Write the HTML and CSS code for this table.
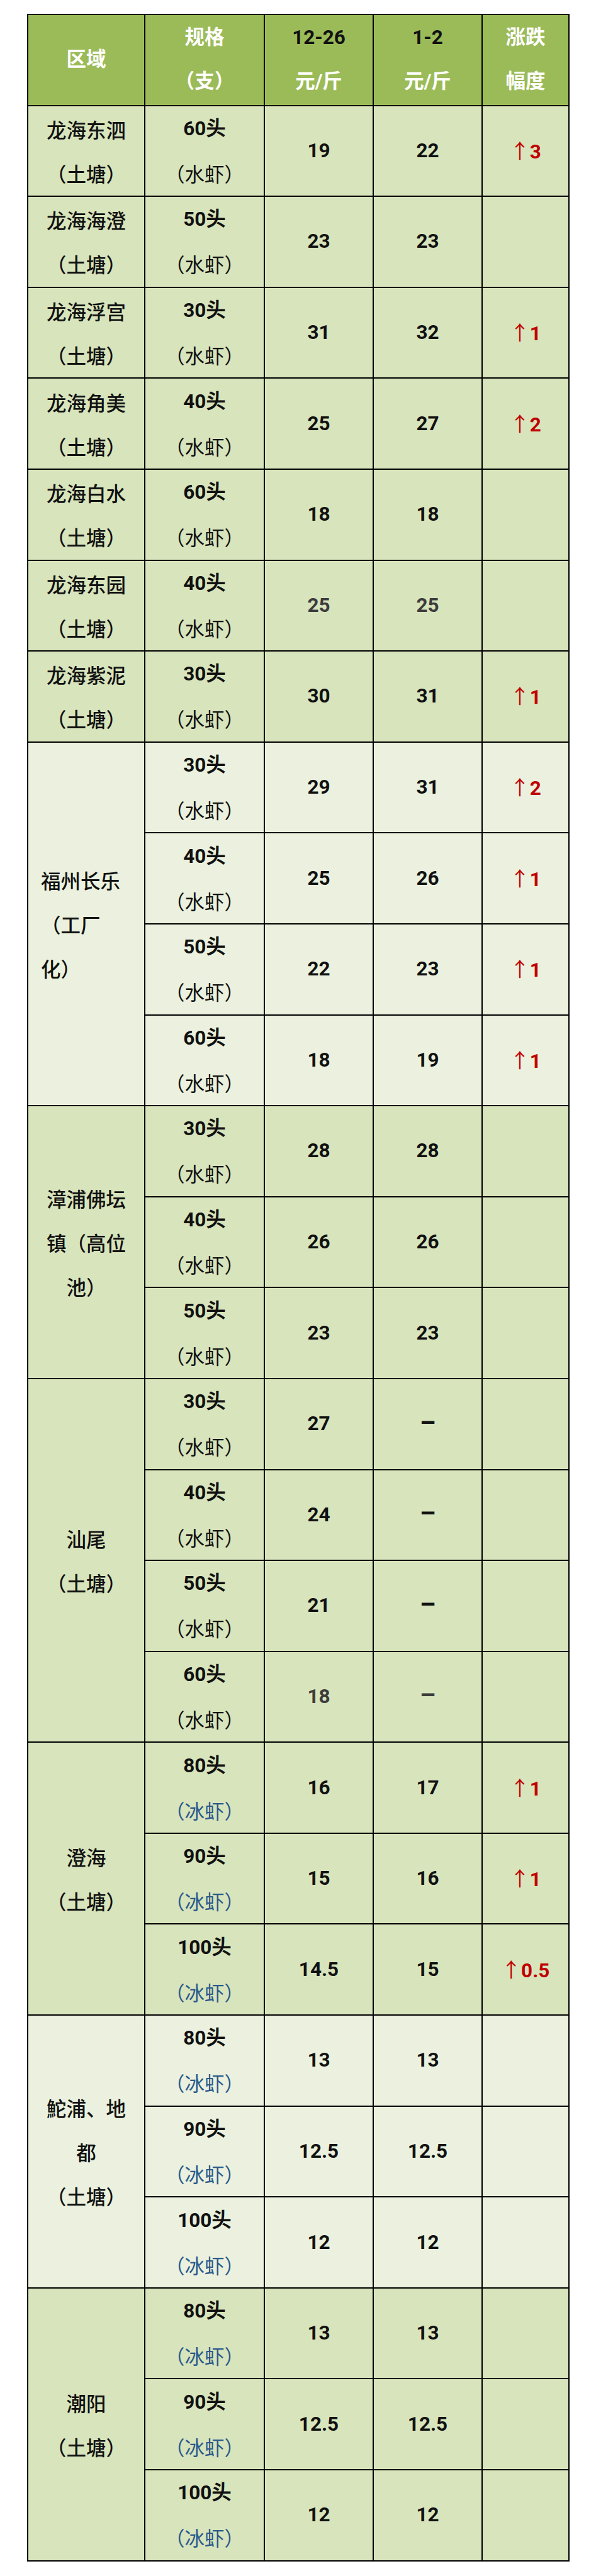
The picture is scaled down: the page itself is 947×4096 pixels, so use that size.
FILE: index.html
```html
<!DOCTYPE html>
<html lang="zh-CN">
<head>
<meta charset="utf-8">
<title>对虾价格</title>
<link rel="stylesheet" href="styles.css">
</head>
<body>
<table class="price">
  <colgroup>
    <col class="c-region"><col class="c-spec"><col class="c-p1"><col class="c-p2"><col class="c-chg">
  </colgroup>
  <thead>
    <tr class="head">
      <th>区域</th>
      <th><span class="ln">规格</span><span class="ln">（支）</span></th>
      <th><span class="ln num">12-26</span><span class="ln">元/斤</span></th>
      <th><span class="ln num">1-2</span><span class="ln">元/斤</span></th>
      <th><span class="ln">涨跌</span><span class="ln">幅度</span></th>
    </tr>
  </thead>
  <tbody>
    <tr class="dark">
      <td class="region"><span class="ln">龙海东泗</span><span class="ln">（土塘）</span></td>
      <td class="spec"><span class="ln s1">60头</span><span class="ln s2">（水虾）</span></td>
      <td class="num">19</td><td class="num">22</td>
      <td class="chg"><span class="arrow">↑</span>3</td>
    </tr>
    <tr class="dark">
      <td class="region"><span class="ln">龙海海澄</span><span class="ln">（土塘）</span></td>
      <td class="spec"><span class="ln s1">50头</span><span class="ln s2">（水虾）</span></td>
      <td class="num">23</td><td class="num">23</td>
      <td class="chg"></td>
    </tr>
    <tr class="dark">
      <td class="region"><span class="ln">龙海浮宫</span><span class="ln">（土塘）</span></td>
      <td class="spec"><span class="ln s1">30头</span><span class="ln s2">（水虾）</span></td>
      <td class="num">31</td><td class="num">32</td>
      <td class="chg"><span class="arrow">↑</span>1</td>
    </tr>
    <tr class="dark">
      <td class="region"><span class="ln">龙海角美</span><span class="ln">（土塘）</span></td>
      <td class="spec"><span class="ln s1">40头</span><span class="ln s2">（水虾）</span></td>
      <td class="num">25</td><td class="num">27</td>
      <td class="chg"><span class="arrow">↑</span>2</td>
    </tr>
    <tr class="dark">
      <td class="region"><span class="ln">龙海白水</span><span class="ln">（土塘）</span></td>
      <td class="spec"><span class="ln s1">60头</span><span class="ln s2">（水虾）</span></td>
      <td class="num">18</td><td class="num">18</td>
      <td class="chg"></td>
    </tr>
    <tr class="dark">
      <td class="region"><span class="ln">龙海东园</span><span class="ln">（土塘）</span></td>
      <td class="spec"><span class="ln s1">40头</span><span class="ln s2">（水虾）</span></td>
      <td class="num grey">25</td><td class="num grey">25</td>
      <td class="chg"></td>
    </tr>
    <tr class="dark">
      <td class="region"><span class="ln">龙海紫泥</span><span class="ln">（土塘）</span></td>
      <td class="spec"><span class="ln s1">30头</span><span class="ln s2">（水虾）</span></td>
      <td class="num">30</td><td class="num">31</td>
      <td class="chg"><span class="arrow">↑</span>1</td>
    </tr>

    <tr class="light">
      <td class="region left" rowspan="4"><span class="ln">福州长乐</span><span class="ln">（工厂</span><span class="ln">化）</span></td>
      <td class="spec"><span class="ln s1">30头</span><span class="ln s2">（水虾）</span></td>
      <td class="num">29</td><td class="num">31</td>
      <td class="chg"><span class="arrow">↑</span>2</td>
    </tr>
    <tr class="light">
      <td class="spec"><span class="ln s1">40头</span><span class="ln s2">（水虾）</span></td>
      <td class="num">25</td><td class="num">26</td>
      <td class="chg"><span class="arrow">↑</span>1</td>
    </tr>
    <tr class="light">
      <td class="spec"><span class="ln s1">50头</span><span class="ln s2">（水虾）</span></td>
      <td class="num">22</td><td class="num">23</td>
      <td class="chg"><span class="arrow">↑</span>1</td>
    </tr>
    <tr class="light">
      <td class="spec"><span class="ln s1">60头</span><span class="ln s2">（水虾）</span></td>
      <td class="num">18</td><td class="num">19</td>
      <td class="chg"><span class="arrow">↑</span>1</td>
    </tr>

    <tr class="dark">
      <td class="region" rowspan="3"><span class="ln">漳浦佛坛</span><span class="ln">镇（高位</span><span class="ln">池）</span></td>
      <td class="spec"><span class="ln s1">30头</span><span class="ln s2">（水虾）</span></td>
      <td class="num">28</td><td class="num">28</td>
      <td class="chg"></td>
    </tr>
    <tr class="dark">
      <td class="spec"><span class="ln s1">40头</span><span class="ln s2">（水虾）</span></td>
      <td class="num">26</td><td class="num">26</td>
      <td class="chg"></td>
    </tr>
    <tr class="dark">
      <td class="spec"><span class="ln s1">50头</span><span class="ln s2">（水虾）</span></td>
      <td class="num">23</td><td class="num">23</td>
      <td class="chg"></td>
    </tr>

    <tr class="dark">
      <td class="region" rowspan="4"><span class="ln">汕尾</span><span class="ln">（土塘）</span></td>
      <td class="spec"><span class="ln s1">30头</span><span class="ln s2">（水虾）</span></td>
      <td class="num">27</td><td class="num"><span class="dash">–</span></td>
      <td class="chg"></td>
    </tr>
    <tr class="dark">
      <td class="spec"><span class="ln s1">40头</span><span class="ln s2">（水虾）</span></td>
      <td class="num">24</td><td class="num"><span class="dash">–</span></td>
      <td class="chg"></td>
    </tr>
    <tr class="dark">
      <td class="spec"><span class="ln s1">50头</span><span class="ln s2">（水虾）</span></td>
      <td class="num">21</td><td class="num"><span class="dash">–</span></td>
      <td class="chg"></td>
    </tr>
    <tr class="dark">
      <td class="spec"><span class="ln s1">60头</span><span class="ln s2">（水虾）</span></td>
      <td class="num grey">18</td><td class="num grey"><span class="dash">–</span></td>
      <td class="chg"></td>
    </tr>

    <tr class="dark">
      <td class="region" rowspan="3"><span class="ln">澄海</span><span class="ln">（土塘）</span></td>
      <td class="spec"><span class="ln s1">80头</span><span class="ln s2 ice">（冰虾）</span></td>
      <td class="num">16</td><td class="num">17</td>
      <td class="chg"><span class="arrow">↑</span>1</td>
    </tr>
    <tr class="dark">
      <td class="spec"><span class="ln s1">90头</span><span class="ln s2 ice">（冰虾）</span></td>
      <td class="num">15</td><td class="num">16</td>
      <td class="chg"><span class="arrow">↑</span>1</td>
    </tr>
    <tr class="dark">
      <td class="spec"><span class="ln s1">100头</span><span class="ln s2 ice">（冰虾）</span></td>
      <td class="num">14.5</td><td class="num">15</td>
      <td class="chg"><span class="arrow">↑</span>0.5</td>
    </tr>

    <tr class="light">
      <td class="region" rowspan="3"><span class="ln">鮀浦、地</span><span class="ln">都</span><span class="ln">（土塘）</span></td>
      <td class="spec"><span class="ln s1">80头</span><span class="ln s2 ice">（冰虾）</span></td>
      <td class="num">13</td><td class="num">13</td>
      <td class="chg"></td>
    </tr>
    <tr class="light">
      <td class="spec"><span class="ln s1">90头</span><span class="ln s2 ice">（冰虾）</span></td>
      <td class="num">12.5</td><td class="num">12.5</td>
      <td class="chg"></td>
    </tr>
    <tr class="light">
      <td class="spec"><span class="ln s1">100头</span><span class="ln s2 ice">（冰虾）</span></td>
      <td class="num">12</td><td class="num">12</td>
      <td class="chg"></td>
    </tr>

    <tr class="dark">
      <td class="region" rowspan="3"><span class="ln">潮阳</span><span class="ln">（土塘）</span></td>
      <td class="spec"><span class="ln s1">80头</span><span class="ln s2 ice">（冰虾）</span></td>
      <td class="num">13</td><td class="num">13</td>
      <td class="chg"></td>
    </tr>
    <tr class="dark">
      <td class="spec"><span class="ln s1">90头</span><span class="ln s2 ice">（冰虾）</span></td>
      <td class="num">12.5</td><td class="num">12.5</td>
      <td class="chg"></td>
    </tr>
    <tr class="dark">
      <td class="spec"><span class="ln s1">100头</span><span class="ln s2 ice">（冰虾）</span></td>
      <td class="num">12</td><td class="num">12</td>
      <td class="chg"></td>
    </tr>
  </tbody>
</table>
</body>
</html>
```
FILE: styles.css
```css
html, body {
  margin: 0;
  padding: 0;
  background: #ffffff;
}

body {
  font-family: "Noto Sans CJK SC", "Noto Sans", sans-serif;
  color: #111111;
}

.price {
  border-collapse: collapse;
  table-layout: fixed;
  width: 860px;
  margin: 22px 0 0 43px;
  font-size: 31.5px;
}

.c-region { width: 186px; }
.c-spec { width: 190px; }
.c-p1 { width: 173px; }
.c-p2 { width: 173px; }
.c-chg { width: 138px; }

.price th,
.price td {
  border: 2px solid #000000;
  height: 142.6px;
  padding: 0;
  text-align: center;
  vertical-align: middle;
  line-height: 70px;
}

.ln {
  display: block;
}

.head {
  background: #9bbb59;
}

.head th {
  color: #ffffff;
  font-weight: 700;
  font-family: Roboto, "Noto Sans CJK SC", sans-serif;
}

.dark {
  background: #d8e4bc;
}

.light {
  background: #ebf1de;
}

.region {
  font-weight: 500;
  line-height: 71px;
}

.region.left {
  text-align: left;
  padding-left: 20px;
}

.spec .s1 {
  font-family: Roboto, "Noto Sans CJK SC", sans-serif;
  font-weight: 700;
}

.spec .s2 {
  font-weight: 400;
}

.spec .ice {
  color: #2a5a8c;
}

.num {
  font-family: Roboto, "Noto Sans CJK SC", sans-serif;
  font-weight: 700;
  color: #111111;
}

.num.grey {
  color: #3c3c3c;
}

.dash {
  font-size: 40px;
}

.chg {
  font-family: Roboto, "Noto Sans CJK SC", sans-serif;
  font-weight: 700;
  color: #c00000;
}

.arrow {
  font-family: "Noto Sans CJK SC", sans-serif;
  font-weight: 400;
}
```
